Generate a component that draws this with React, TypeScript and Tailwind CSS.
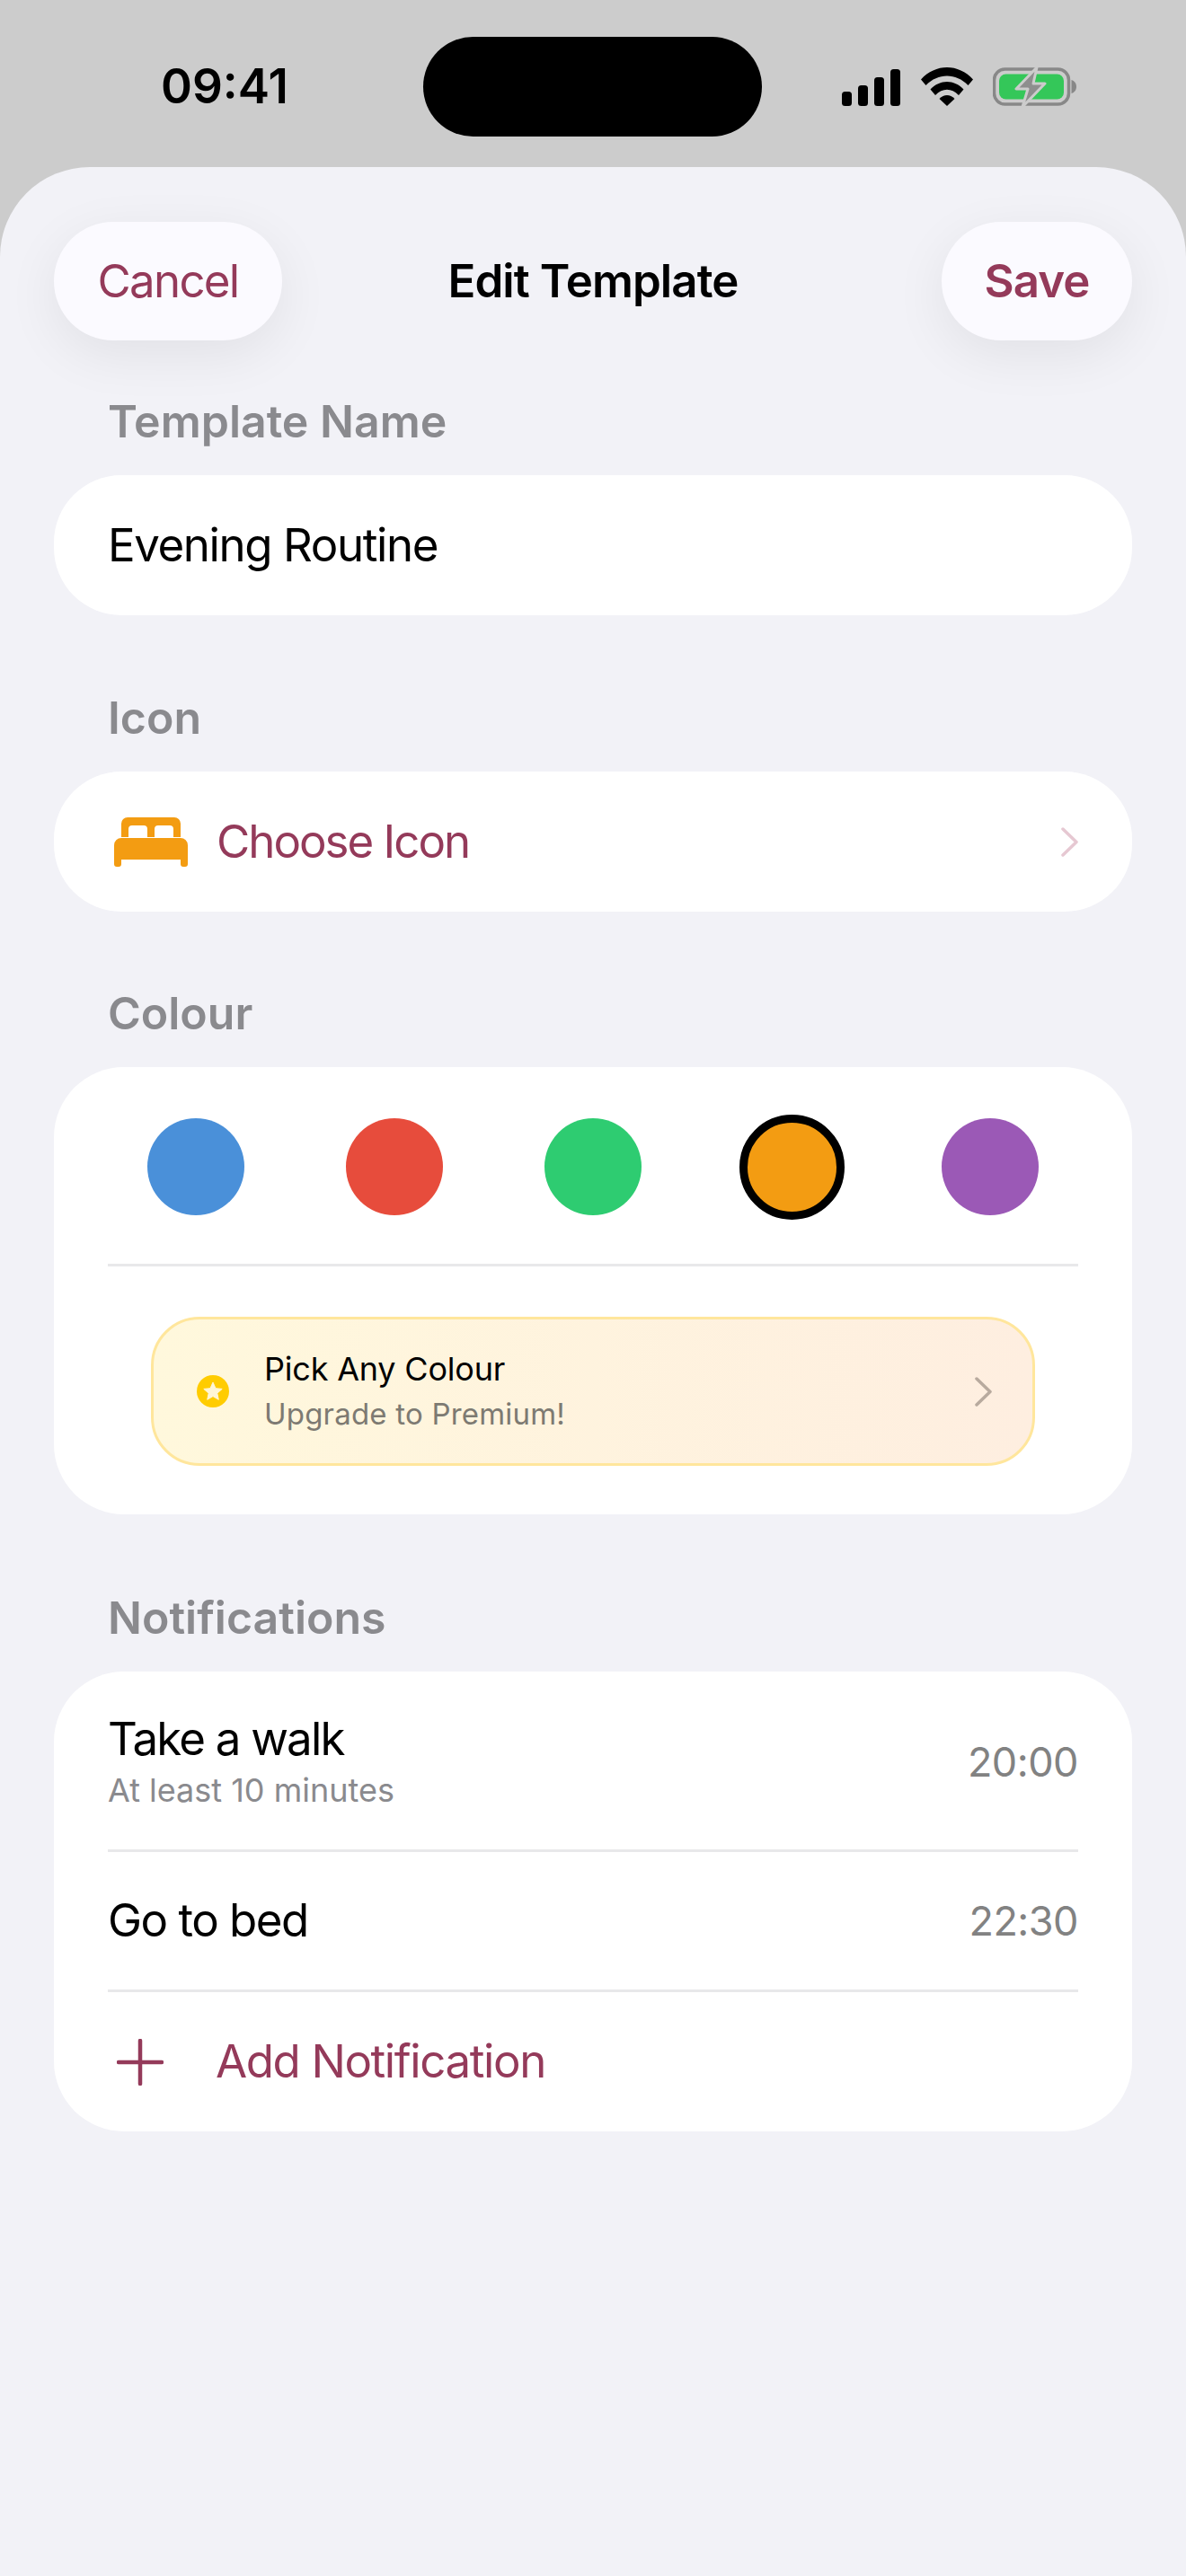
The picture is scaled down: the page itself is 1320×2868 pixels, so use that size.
const font = { fontFamily: 'Inter, sans-serif' };

function StatusIcons() {
  return (
    <div className="flex items-center">
      <svg width="65" height="41" viewBox="0 0 65 41" className="mt-[2px]">
        <rect x="0" y="25" width="11" height="16" rx="3.5" fill="#000" />
        <rect x="18" y="18" width="11" height="23" rx="3.5" fill="#000" />
        <rect x="36" y="9" width="11" height="32" rx="3.5" fill="#000" />
        <rect x="54" y="0" width="11" height="41" rx="3.5" fill="#000" />
      </svg>
      <svg width="58" height="43" viewBox="0 0 58 43" className="ml-[23px]">
        <path d="M0 13.5 C16 -4.5 42 -4.5 58 13.5 L52.5 20 C39 6 19 6 5.500 20 Z" fill="#000" />
        <path d="M10.500 24.500 C21 13 37 13 47.500 24.500 L42 31 C34 22.500 24 22.500 16 31 Z" fill="#000" />
        <path d="M20.500 35 C25.500 29.500 32.500 29.500 37.500 35 L29 43 Z" fill="#000" />
      </svg>
      <svg width="94" height="44" viewBox="0 0 94 44" className="ml-[22px]">
        <rect x="1.500" y="2" width="83" height="39" rx="12" fill="none" stroke="#888888" strokeWidth="3.500" />
        <rect x="7" y="7.500" width="72" height="28" rx="7.500" fill="#34c759" />
        <path d="M87.500 14 C91 15 93 18 93 21.500 C93 25 91 28 87.500 29 Z" fill="#888888" />
        <path d="M49 0 L26 24 L39 24 L33 44 L58 18 L45 18 Z" fill="#8e8e8e" stroke="#cccccc" strokeWidth="3" strokeLinejoin="round" />
      </svg>
    </div>
  );
}

function BedIcon() {
  return (
    <svg width="82" height="55" viewBox="0 0 82 55" fill="#f39c12">
      <path d="M8 22 V7 a7 7 0 0 1 7-7 H67 a7 7 0 0 1 7 7 V22 H66 V13 a4 4 0 0 0-4-4 H49 a4 4 0 0 0-4 4 V22 H37 V13 a4 4 0 0 0-4-4 H20 a4 4 0 0 0-4 4 V22 Z" />
      <path d="M8 23 H74 a8 8 0 0 1 8 8 V52 a3 3 0 0 1-3 3 H77 a3 3 0 0 1-3-3 V47 H8 V52 a3 3 0 0 1-3 3 H3 a3 3 0 0 1-3-3 V31 a8 8 0 0 1 8-8 Z" />
    </svg>
  );
}

function Chevron({ color }: { color: string }) {
  return (
    <svg width="19" height="33" viewBox="0 0 19 33" fill="none">
      <path d="M2 2 L17 16.500 L2 31" stroke={color} strokeWidth="3.500" strokeLinecap="round" strokeLinejoin="round" />
    </svg>
  );
}

function SectionLabel({ children }: { children: string }) {
  return <div className="h-[60px] px-[60px] text-[50px] leading-[60px] font-semibold text-[#8a8a8e]">{children}</div>;
}

export default function App() {
  return (
    <div className="w-[1320px] h-[2868px] bg-[#cccccc] overflow-hidden text-black" style={font}>
      {/* status bar */}
      <div className="h-[186px] flex items-start pt-[41px]">
        <div className="w-[471px] h-[111px] flex items-center pl-[179px] text-[53px] font-semibold">09:41</div>
        <div className="w-[377px] h-[111px] rounded-full bg-black" />
        <div className="h-[111px] flex items-center ml-[89px]">
          <StatusIcons />
        </div>
      </div>

      {/* sheet */}
      <div className="h-[2682px] bg-[#f2f2f7] rounded-t-[100px] overflow-hidden px-[60px] pt-[61px]">
        <div className="h-[132px] grid grid-cols-[1fr_auto_1fr] items-center">
          <button className="justify-self-start w-[254px] h-[132px] rounded-[66px] bg-[#fbfaff] shadow-[0_16px_60px_rgba(0,0,0,0.07)] text-[51px] tracking-[-1.7px] text-[#943a5a]">Cancel</button>
          <div className="text-[51px] tracking-[-0.9px] font-semibold">Edit Template</div>
          <button className="justify-self-end w-[212px] h-[132px] rounded-[66px] bg-[#fbfaff] shadow-[0_16px_60px_rgba(0,0,0,0.07)] text-[51px] tracking-[-1px] font-semibold text-[#943a5a]">Save</button>
        </div>

        <div className="mt-[60px]">
          <SectionLabel>Template Name</SectionLabel>
        </div>
        <div className="mt-[30px] h-[156px] rounded-[75px] bg-white flex items-center px-[60px] text-[51px] tracking-[-1.4px]">Evening Routine</div>

        <div className="mt-[84px]">
          <SectionLabel>Icon</SectionLabel>
        </div>
        <div className="mt-[30px] h-[156px] rounded-[75px] bg-white flex items-center pl-[67px] pr-[60px]">
          <BedIcon />
          <span className="ml-[32px] text-[51px] tracking-[-2px] text-[#943a5a]">Choose Icon</span>
          <span className="ml-auto">
            <Chevron color="#e6c8d2" />
          </span>
        </div>

        <div className="mt-[83px]">
          <SectionLabel>Colour</SectionLabel>
        </div>
        <div className="mt-[30px] h-[498px] rounded-[78px] bg-white px-[60px] pt-[57px]">
          <div className="flex justify-between items-center px-[44px]">
            <div className="w-[108px] h-[108px] rounded-full bg-[#4a90d9]" />
            <div className="w-[108px] h-[108px] rounded-full bg-[#e74c3c]" />
            <div className="w-[108px] h-[108px] rounded-full bg-[#2ecc71]" />
            <div className="w-[117px] h-[117px] -m-[4.5px] rounded-full bg-[#f39c12] border-[9px] border-black" />
            <div className="w-[108px] h-[108px] rounded-full bg-[#9b59b6]" />
          </div>
          <div className="mt-[54px] h-[3px] bg-[#e8e8ea]" />
          <div className="mt-[56px] mx-[48px] h-[166px] rounded-[54px] border-[3px] border-[#ffe69c] bg-gradient-to-r from-[#fff8dc] to-[#feeee0] flex items-center pl-[48px] pr-[48px]">
            <svg width="36" height="36" viewBox="0 0 36 36">
              <circle cx="18" cy="18" r="18" fill="#ffcc00" />
              <path d="M18 8 L21 14.700 L28.200 15.400 L22.800 20.200 L24.300 27.300 L18 23.600 L11.700 27.300 L13.200 20.200 L7.800 15.400 L15 14.700 Z" fill="#fff6d6" stroke="#fff6d6" strokeLinejoin="round" />
            </svg>
            <div className="ml-[39px]">
              <div className="text-[36px] leading-[50px] tracking-[-0.2px]">Pick Any Colour</div>
              <div className="text-[33px] leading-[50px] text-[#7d7a72] tracking-[0.2px]">Upgrade to Premium!</div>
            </div>
            <span className="ml-auto -mr-[3px]">
              <Chevron color="#b8aa9e" />
            </span>
          </div>
        </div>

        <div className="mt-[85px]">
          <SectionLabel>Notifications</SectionLabel>
        </div>
        <div className="mt-[30px] h-[512px] rounded-[78px] bg-white px-[60px]">
          <div className="h-[198px] flex items-center justify-between pt-[3px]">
            <div>
              <div className="text-[51px] leading-[60px] tracking-[-1.8px]">Take a walk</div>
              <div className="mt-[2px] text-[36px] leading-[50px] text-[#8a8a8e]">At least 10 minutes</div>
            </div>
            <div className="text-[45px] tracking-[-0.5px] text-[#828282]">20:00</div>
          </div>
          <div className="h-[3px] bg-[#e8e8ea]" />
          <div className="h-[153px] flex items-center justify-between">
            <div className="text-[51px] tracking-[-1.5px]">Go to bed</div>
            <div className="text-[45px] tracking-[-0.5px] text-[#828282]">22:30</div>
          </div>
          <div className="h-[3px] bg-[#e8e8ea]" />
          <div className="h-[155px] flex items-center pl-[10px]">
            <svg width="52" height="52" viewBox="0 0 52 52" fill="none">
              <path d="M26 2 V50 M2 26 H50" stroke="#943a5a" strokeWidth="4.500" strokeLinecap="round" />
            </svg>
            <span className="ml-[58px] text-[51px] tracking-[-1.4px] text-[#943a5a]">Add Notification</span>
          </div>
        </div>
      </div>
    </div>
  );
}
